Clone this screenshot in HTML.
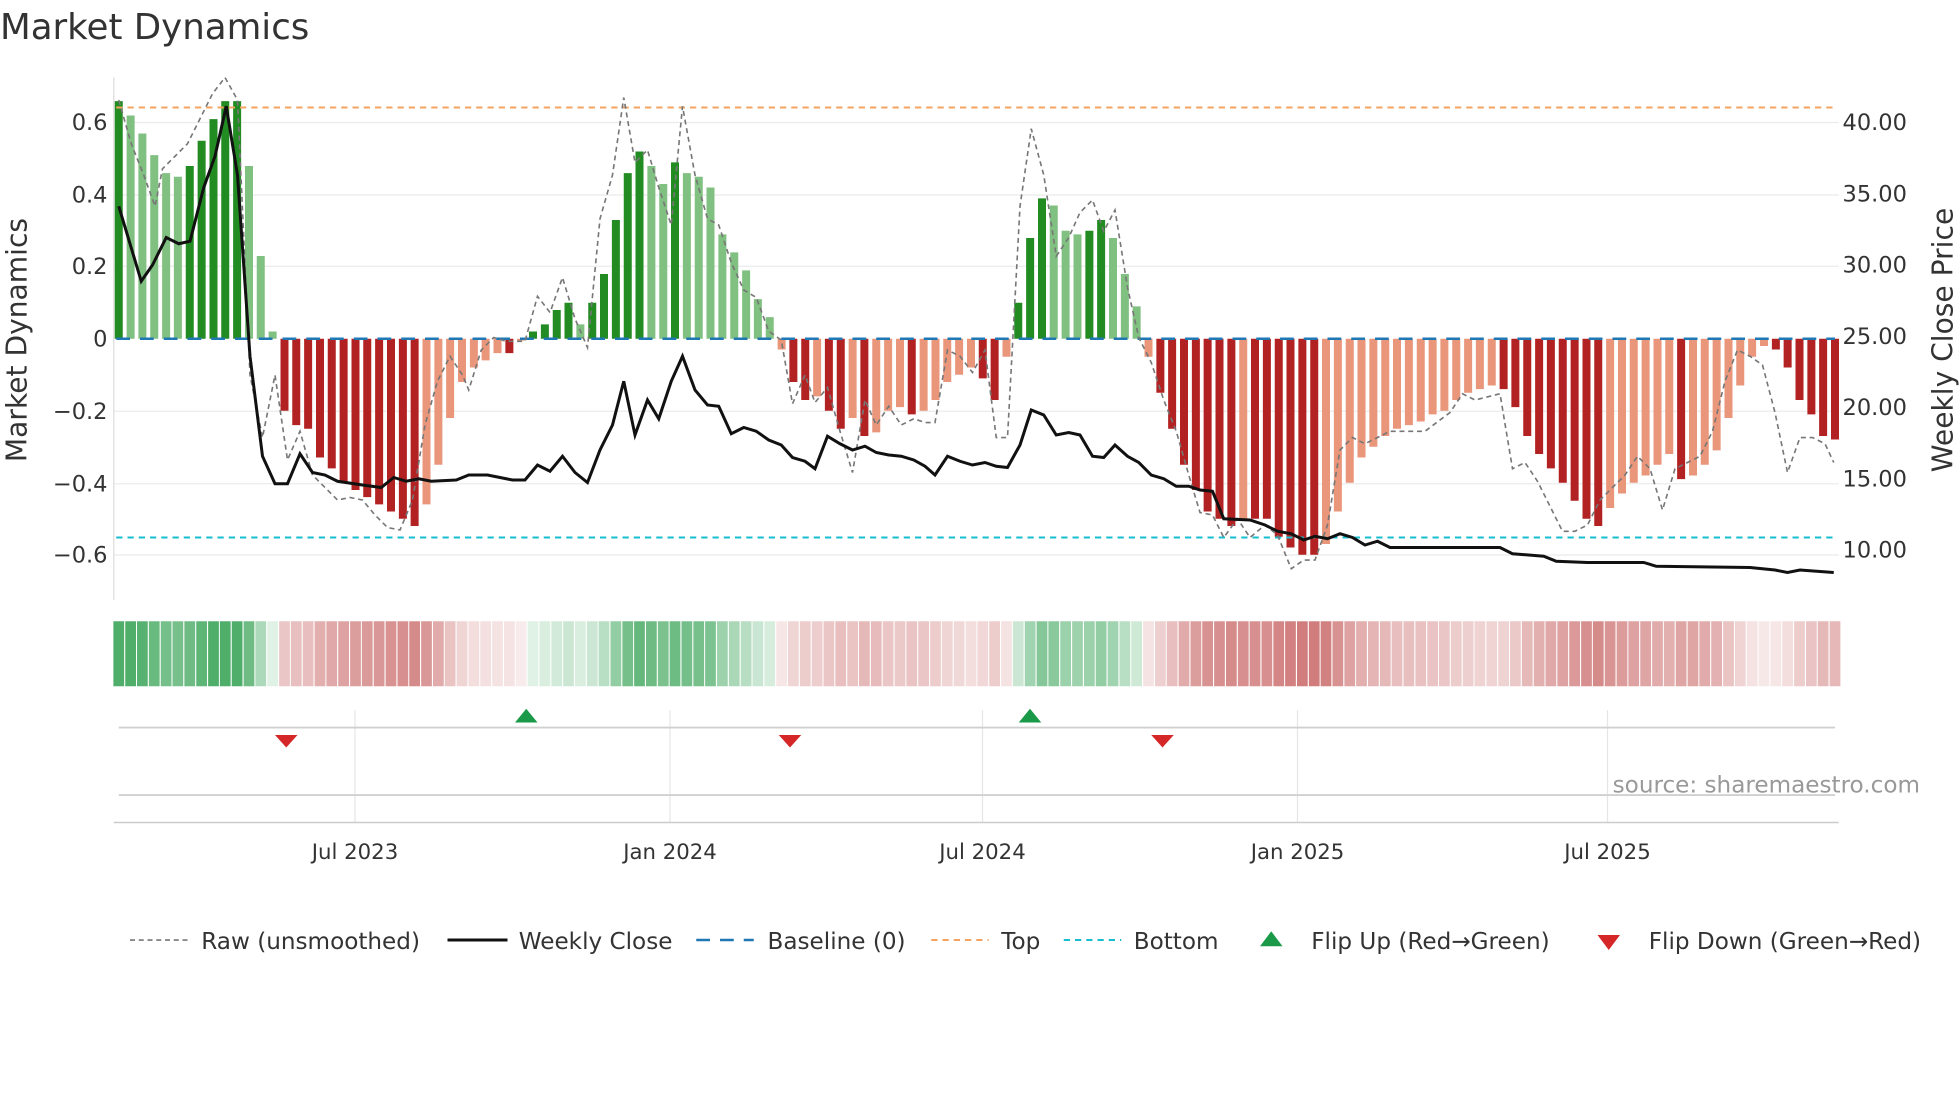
<!DOCTYPE html>
<html><head><meta charset="utf-8"><style>
html,body{margin:0;padding:0;background:#fff;width:1960px;height:1102px;overflow:hidden}
svg{display:block;font-family:"DejaVu Sans","Liberation Sans",sans-serif}
</style></head><body>
<svg id="s" width="1960" height="1102" viewBox="0 0 1568 881.6" xmlns="http://www.w3.org/2000/svg">
<text x="0" y="31" font-size="28.5" fill="#333">Market Dynamics</text>
<g stroke="#ebebeb" stroke-width="1">
<line x1="91" x2="1471" y1="98" y2="98"/><line x1="91" x2="1471" y1="156" y2="156"/><line x1="91" x2="1471" y1="213" y2="213"/><line x1="91" x2="1471" y1="329" y2="329"/><line x1="91" x2="1471" y1="387" y2="387"/><line x1="91" x2="1471" y1="444" y2="444"/>
</g>
<line x1="91" x2="91" y1="62" y2="480" stroke="#ddd"/>
<g font-size="18" fill="#333" text-anchor="end">
<text x="86" y="104">0.6</text><text x="86" y="162">0.4</text><text x="86" y="219">0.2</text><text x="86" y="277">0</text><text x="86" y="335">−0.2</text><text x="86" y="393">−0.4</text><text x="86" y="450">−0.6</text>
</g>
<g font-size="18" fill="#333">
<text x="1474" y="104">40.00</text><text x="1474" y="161">35.00</text><text x="1474" y="218">30.00</text><text x="1474" y="275">25.00</text><text x="1474" y="332">20.00</text><text x="1474" y="389">15.00</text><text x="1474" y="446">10.00</text>
</g>
<text transform="translate(21,272) rotate(-90)" font-size="22.5" fill="#333" text-anchor="middle">Market Dynamics</text>
<text transform="translate(1562,272) rotate(-90)" font-size="22.5" fill="#333" text-anchor="middle">Weekly Close Price</text>
<g id="bars"></g>
<line x1="93" x2="1468" y1="271" y2="271" stroke="#1f77b4" stroke-width="2" stroke-dasharray="11,8"/>
<line x1="93" x2="1468" y1="86" y2="86" stroke="#f4a460" stroke-width="1.6" stroke-dasharray="5,4"/>
<line x1="93" x2="1468" y1="430" y2="430" stroke="#17becf" stroke-width="1.6" stroke-dasharray="5,4"/>
<polyline fill="none" stroke="#777" stroke-width="1.3" stroke-dasharray="4,3" points="95,80 105,115 115,140 124,165 130,135 140,125 150,115 160,95 170,75 180,62 190,80 200,300 210,350 220,300 230,368 240,345 250,380 260,390 270,400 280,398 290,400 300,412 310,422 320,424 330,400 340,340 350,305 360,285 370,300 375,312 385,280 395,270 405,273 420,273 430,237 440,250 450,222 460,255 470,278 480,175 490,140 499,78 508,130 518,120 527,150 537,180 546,85 556,140 566,175 575,180 585,210 595,232 605,238 615,265 625,272 634,323 644,300 652,322 662,310 672,345 682,378 692,320 701,340 711,325 721,340 731,335 740,338 748,338 758,280 768,285 778,298 788,280 797,350 806,350 816,165 825,103 835,140 845,205 855,190 864,170 874,160 883,185 892,168 902,230 911,270 921,290 931,320 941,345 951,380 960,410 970,412 979,430 990,415 1000,430 1012,420 1022,428 1033,455 1043,448 1052,448 1062,420 1072,360 1082,350 1092,355 1102,350 1112,345 1122,345 1140,345 1160,330 1170,315 1180,320 1200,315 1210,375 1220,370 1230,385 1240,405 1250,425 1260,425 1270,420 1280,400 1290,390 1300,380 1310,365 1320,375 1330,408 1340,375 1350,370 1360,365 1370,345 1380,305 1390,280 1400,285 1410,292 1420,330 1430,378 1440,350 1450,350 1460,355 1467,370"/>
<polyline fill="none" stroke="#111" stroke-width="2.4" points="95,165 113,225 122,212 133,190 143,195 152,193 163,150 172,125 181,85 190,140 200,285 210,365 220,387 230,387 240,363 250,378 260,380 270,385 290,388 305,390 315,382 325,385 335,383 345,385 365,384 375,380 390,380 400,382 410,384 420,384 430,372 440,377 450,365 460,378 470,386 480,360 490,340 499,305 508,348 518,320 527,335 537,305 546,285 556,312 566,324 575,325 585,347 595,342 605,345 615,352 625,356 634,366 644,369 652,375 662,349 672,355 682,360 692,357 701,362 711,364 721,365 731,368 740,373 748,380 758,365 768,369 778,372 788,370 797,373 806,374 816,356 825,328 835,332 845,348 855,346 864,348 874,365 883,366 892,356 902,365 911,370 921,380 931,383 941,389 951,389 960,392 970,393 979,415 1000,416 1012,420 1022,425 1033,427 1043,432 1052,429 1062,431 1072,427 1082,430 1092,436 1102,433 1112,438 1200,438 1210,443 1235,445 1245,449 1270,450 1315,450 1325,453 1400,454 1420,456 1430,458 1440,456 1467,458"/>
<g id="heat"></g>
<g stroke="#e6e6e6" stroke-width="1">
<line x1="284" x2="284" y1="568" y2="658"/><line x1="536" x2="536" y1="568" y2="658"/><line x1="786" x2="786" y1="568" y2="658"/><line x1="1038" x2="1038" y1="568" y2="658"/><line x1="1286" x2="1286" y1="568" y2="658"/>
</g>
<line x1="95" x2="1468" y1="582" y2="582" stroke="#d0d0d0" stroke-width="1.5"/>
<line x1="95" x2="1468" y1="636" y2="636" stroke="#d0d0d0" stroke-width="1.5"/>
<line x1="91" x2="1471" y1="658" y2="658" stroke="#ccc" stroke-width="1.2"/>
<g fill="#1a9a48"><polygon points="412,578 430,578 421,567"/><polygon points="815,578 833,578 824,567"/></g>
<g fill="#d62728"><polygon points="220,588 238,588 229,598"/><polygon points="623,588 641,588 632,598"/><polygon points="921,588 939,588 930,598"/></g>
<text x="1536" y="634" font-size="18.5" fill="#999" text-anchor="end">source: sharemaestro.com</text>
<g font-size="17" fill="#333" text-anchor="middle">
<text x="284" y="687">Jul 2023</text><text x="536" y="687">Jan 2024</text><text x="786" y="687">Jul 2024</text><text x="1038" y="687">Jan 2025</text><text x="1286" y="687">Jul 2025</text>
</g>
<g font-size="18.5" fill="#333">
<line x1="104" x2="150" y1="752" y2="752" stroke="#777" stroke-width="1.3" stroke-dasharray="4,3"/><text x="161" y="759">Raw (unsmoothed)</text>
<line x1="358" x2="406" y1="752" y2="752" stroke="#111" stroke-width="2.4"/><text x="415" y="759">Weekly Close</text>
<line x1="557" x2="603" y1="752" y2="752" stroke="#1f77b4" stroke-width="2" stroke-dasharray="11,8"/><text x="614" y="759">Baseline (0)</text>
<line x1="745" x2="791" y1="752" y2="752" stroke="#f4a460" stroke-width="1.6" stroke-dasharray="5,4"/><text x="801" y="759">Top</text>
<line x1="851" x2="897" y1="752" y2="752" stroke="#17becf" stroke-width="1.6" stroke-dasharray="5,4"/><text x="907" y="759">Bottom</text>
<polygon points="1008,757 1026,757 1017,745" fill="#1a9a48"/><text x="1049" y="759">Flip Up (Red→Green)</text>
<polygon points="1278,748 1296,748 1287,760" fill="#d62728"/><text x="1319" y="759">Flip Down (Green→Red)</text>
</g>
</svg>
<script>
(function(){
var NS="http://www.w3.org/2000/svg";
function R(g,x,y,w,h,f,o){var r=document.createElementNS(NS,"rect");r.setAttribute("x",x);r.setAttribute("y",y);r.setAttribute("width",w);r.setAttribute("height",h);r.setAttribute("fill",f);if(o!=null)r.setAttribute("fill-opacity",o);g.appendChild(r);}
var v=[0.66,0.62,0.57,0.51,0.46,0.45,0.48,0.55,0.61,0.66,0.66,0.48,0.23,0.02,
-0.2,-0.24,-0.25,-0.33,-0.36,-0.4,-0.42,-0.44,-0.46,-0.48,-0.5,-0.52,-0.46,-0.35,-0.22,-0.12,-0.08,-0.06,-0.04,-0.04,-0.005,
0.02,0.04,0.08,0.1,0.04,0.1,0.18,0.33,0.46,0.52,0.48,0.43,0.49,0.46,0.45,0.42,0.29,0.24,0.19,0.11,0.06,
-0.03,-0.12,-0.17,-0.16,-0.2,-0.25,-0.22,-0.27,-0.26,-0.2,-0.19,-0.21,-0.2,-0.17,-0.12,-0.1,-0.08,-0.11,-0.17,-0.05,
0.1,0.28,0.39,0.37,0.3,0.29,0.3,0.33,0.28,0.18,0.09,
-0.05,-0.15,-0.25,-0.35,-0.42,-0.48,-0.5,-0.52,-0.5,-0.5,-0.5,-0.55,-0.58,-0.6,-0.6,-0.57,-0.48,-0.4,-0.33,-0.3,-0.27,-0.25,-0.24,-0.23,-0.21,-0.2,-0.17,-0.15,-0.14,-0.13,-0.14,
-0.19,-0.27,-0.32,-0.36,-0.4,-0.45,-0.5,-0.52,-0.47,-0.43,-0.4,-0.38,-0.35,-0.32,-0.39,-0.38,-0.35,-0.31,-0.22,-0.13,-0.05,-0.02,-0.03,-0.08,-0.17,-0.21,-0.27,-0.28];
var n=v.length,x0=95,x1=1468,step=(x1-x0)/(n-1);
var gb=document.getElementById("bars"),gh=document.getElementById("heat");
for(var i=0;i<n;i++){var x=x0+i*step,y=v[i],p=i?v[i-1]:0,dark=Math.abs(y)>=Math.abs(p)-0.001;
var c=y>=0?(dark?"#228b22":"#80c080"):(dark?"#b22222":"#e9967a");
var top=y>=0?271-y*288:271,ht=Math.abs(y)*288;
R(gb,(x-3.2).toFixed(1),top.toFixed(1),6.4,ht.toFixed(1),c);
var a=Math.min(1,0.15+Math.abs(y)*1.4);
R(gh,(x-4.3).toFixed(1),497,8.6,52,y>=0?"rgb(48,160,80)":"rgb(200,100,100)",(a*0.85).toFixed(2));}
})();
</script>
</body></html>
